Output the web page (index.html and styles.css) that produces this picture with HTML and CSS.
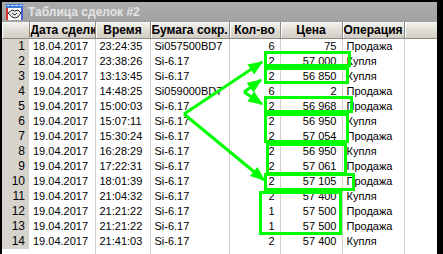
FILE: index.html
```html
<!DOCTYPE html>
<html lang="ru">
<head>
<meta charset="utf-8">
<title>Таблица сделок #2</title>
<link rel="stylesheet" href="styles.css">
</head>
<body>
<div class="win">
  <div class="title">
    <svg class="icon" width="17" height="16" viewBox="0 0 17 16">
      <rect x="0" y="0" width="17" height="16" fill="#ffffff"/>
      <rect x="0" y="0" width="17" height="4" fill="#3b78d8"/>
      <rect x="1" y="1" width="3" height="1" fill="#cfe0ff"/>
      <rect x="5" y="1" width="3" height="1" fill="#cfe0ff"/>
      <rect x="9" y="1" width="3" height="1" fill="#cfe0ff"/>
      <rect x="13" y="1" width="3" height="1" fill="#cfe0ff"/>
      <rect x="0" y="4" width="2" height="12" fill="#d83030"/>
      <rect x="15" y="4" width="2" height="12" fill="#4060d0"/>
      <path d="M2 9 L6 6 L9 7 L12 6 L15 9 L12 13 L9 14 L6 13 Z" fill="#e8e8e8" stroke="#303030" stroke-width="1"/>
      <path d="M6 9 L9 11 L11 9" fill="none" stroke="#303030" stroke-width="1"/>
    </svg>
    <span class="title-text">Таблица сделок #2</span>
  </div>
  <table class="grid">
    <colgroup>
      <col class="c-num"><col class="c-date"><col class="c-time"><col class="c-sec"><col class="c-qty"><col class="c-price"><col class="c-op"><col class="c-fill">
    </colgroup>
    <thead>
      <tr>
        <th></th>
        <th>Дата сделки</th>
        <th>Время</th>
        <th>Бумага сокр.</th>
        <th>Кол-во</th>
        <th>Цена</th>
        <th>Операция</th>
        <th class="th-fill"></th>
      </tr>
    </thead>
    <tbody>
      <tr><td class="num">1</td><td>18.04.2017</td><td>23:24:35</td><td>Si057500BD7</td><td class="r">6</td><td class="r">75</td><td>Продажа</td><td class="fill"></td></tr>
      <tr><td class="num">2</td><td>18.04.2017</td><td>23:38:26</td><td>Si-6.17</td><td class="r">2</td><td class="r">57 000</td><td>Купля</td><td class="fill"></td></tr>
      <tr><td class="num">3</td><td>19.04.2017</td><td>13:13:45</td><td>Si-6.17</td><td class="r">2</td><td class="r">56 850</td><td>Купля</td><td class="fill"></td></tr>
      <tr><td class="num">4</td><td>19.04.2017</td><td>14:48:25</td><td>Si059000BD7</td><td class="r">6</td><td class="r">2</td><td>Продажа</td><td class="fill"></td></tr>
      <tr><td class="num">5</td><td>19.04.2017</td><td>15:00:03</td><td>Si-6.17</td><td class="r">2</td><td class="r">56 968</td><td>Продажа</td><td class="fill"></td></tr>
      <tr><td class="num">6</td><td>19.04.2017</td><td>15:07:11</td><td>Si-6.17</td><td class="r">2</td><td class="r">56 950</td><td>Купля</td><td class="fill"></td></tr>
      <tr><td class="num">7</td><td>19.04.2017</td><td>15:30:24</td><td>Si-6.17</td><td class="r">2</td><td class="r">57 054</td><td>Продажа</td><td class="fill"></td></tr>
      <tr><td class="num">8</td><td>19.04.2017</td><td>16:28:29</td><td>Si-6.17</td><td class="r">2</td><td class="r">56 950</td><td>Купля</td><td class="fill"></td></tr>
      <tr><td class="num">9</td><td>19.04.2017</td><td>17:22:31</td><td>Si-6.17</td><td class="r">2</td><td class="r">57 061</td><td>Продажа</td><td class="fill"></td></tr>
      <tr><td class="num">10</td><td>19.04.2017</td><td>18:01:39</td><td>Si-6.17</td><td class="r">2</td><td class="r">57 105</td><td>Продажа</td><td class="fill"></td></tr>
      <tr><td class="num">11</td><td>19.04.2017</td><td>21:04:32</td><td>Si-6.17</td><td class="r">2</td><td class="r">57 400</td><td>Купля</td><td class="fill"></td></tr>
      <tr><td class="num">12</td><td>19.04.2017</td><td>21:21:22</td><td>Si-6.17</td><td class="r">1</td><td class="r">57 500</td><td>Продажа</td><td class="fill"></td></tr>
      <tr><td class="num">13</td><td>19.04.2017</td><td>21:21:22</td><td>Si-6.17</td><td class="r">1</td><td class="r">57 500</td><td>Продажа</td><td class="fill"></td></tr>
      <tr><td class="num">14</td><td>19.04.2017</td><td>21:41:03</td><td>Si-6.17</td><td class="r">2</td><td class="r">57 400</td><td>Купля</td><td class="fill"></td></tr>
      <tr class="blank"><td class="num"></td><td></td><td></td><td></td><td></td><td></td><td></td><td class="fill"></td></tr>
    </tbody>
  </table>
</div>
<svg class="annot" width="443" height="254" viewBox="0 0 443 254">
  <defs>
    <marker id="ah" markerWidth="5" markerHeight="4" refX="4.5" refY="2" orient="auto" markerUnits="strokeWidth">
      <path d="M0 0 L5 2 L0 4 Z" fill="#00ff00"/>
    </marker>
  </defs>
  <g fill="none" stroke="#00ff00" stroke-width="3">
    <rect x="265.5" y="52.5" width="84" height="13"/>
    <rect x="265.5" y="68.5" width="82" height="14"/>
    <rect x="265.5" y="97.5" width="86" height="14"/>
    <rect x="265.5" y="114.5" width="82" height="27"/>
    <rect x="267.5" y="144.5" width="78" height="29"/>
    <rect x="265.5" y="174.5" width="88" height="15"/>
    <rect x="260.5" y="192.5" width="80" height="41"/>
    <line x1="184" y1="114" x2="262" y2="62" marker-end="url(#ah)"/>
    <line x1="184" y1="114" x2="264" y2="180" marker-end="url(#ah)"/>
    <line x1="244" y1="92" x2="261" y2="80" marker-end="url(#ah)"/>
    <line x1="244" y1="92" x2="262" y2="104" marker-end="url(#ah)"/>
  </g>
</svg>
</body>
</html>
```
FILE: styles.css
```css
html, body {
  margin: 0;
  padding: 0;
  background: #000000;
  width: 443px;
  height: 254px;
  overflow: hidden;
}

.win {
  margin: 2px 6px 0 2px;
  width: 435px;
  height: 252px;
  background: #ffffff;
  overflow: hidden;
}

.title {
  height: 20px;
  background: linear-gradient(#acacac, #a2a2a2);
  display: flex;
  align-items: center;
  padding-left: 4px;
  gap: 5px;
}

.icon {
  display: block;
  flex: none;
}

.title-text {
  font-family: "Liberation Sans", Arial, sans-serif;
  font-weight: bold;
  font-size: 12px;
  color: #e4e4e4;
  white-space: nowrap;
}

.grid {
  table-layout: fixed;
  border-collapse: collapse;
  width: 435px;
  font-family: "Liberation Sans", Arial, sans-serif;
  font-size: 11px;
  color: #000000;
}

.c-num { width: 27px; }
.c-date { width: 66px; }
.c-time { width: 55px; }
.c-sec { width: 79px; }
.c-qty { width: 51px; }
.c-price { width: 62px; }
.c-op { width: 62px; }
.c-fill { width: 33px; }

.grid th {
  height: 16px;
  padding: 0 1px;
  background: linear-gradient(#f6f5f1 0%, #e2dfd8 45%, #d2cec6 100%);
  border-right: 1px solid #8c8a84;
  border-bottom: 1px solid #8c8a84;
  box-shadow: inset 1px 0 0 #ffffff;
  font-weight: bold;
  font-size: 12px;
  text-align: center;
  white-space: nowrap;
  overflow: hidden;
  line-height: 16px;
}

.grid th.th-fill {
  border-right: none;
}

.grid td {
  height: 15px;
  padding: 0 4px 0 4px;
  line-height: 15px;
  border-right: 1px solid #d4d0c8;
  white-space: nowrap;
  overflow: hidden;
}

.grid td.num {
  background: #d6d3cc;
  text-align: right;
  padding-right: 4px;
  font-size: 12px;
  border-right: none;
}

.grid td.r {
  text-align: right;
  padding-right: 5px;
}

.grid td.fill {
  border-right: none;
}

.grid tr.blank td.num {
  background: #ffffff;
}

.annot {
  position: absolute;
  left: 0;
  top: 0;
  pointer-events: none;
}
```
